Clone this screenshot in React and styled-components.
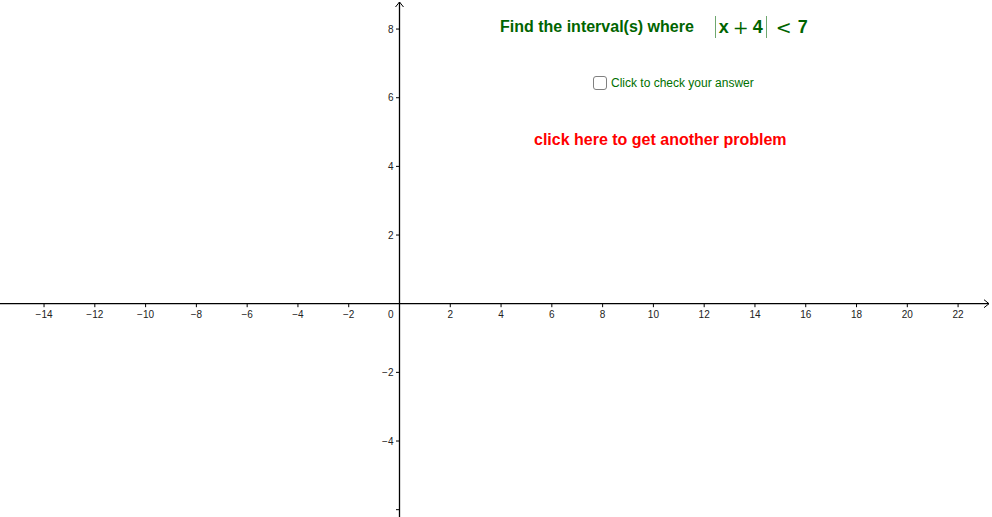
import styled, { createGlobalStyle } from "styled-components";

const GlobalStyle = createGlobalStyle`
    body {
        margin: 0;
        background: #ffffff;
        font-family: "Liberation Sans", Arial, sans-serif;
    }
`;

const W = 992;
const H = 517;
const X0 = 399.5;
const DX = 25.39;
const Y0 = 303.7;
const DY = 34.33;

const xTicks = [];
for (let v = -14; v <= 22; v += 2) if (v !== 0) xTicks.push(v);
const yTicks = [-6, -4, -2, 2, 4, 6, 8];

const label = (v) => (v < 0 ? "\u2212" + Math.abs(v) : String(v));

const App = () => {
    return (
        <>
            <GlobalStyle />
            <Canvas>
                <Graph width={W} height={H} viewBox={`0 0 ${W} ${H}`}>
                    <g stroke="#000" strokeWidth="1.3" fill="none">
                        <line x1="0" y1={Y0} x2={W - 3} y2={Y0} />
                        <polyline points={`${W - 8},${Y0 - 4} ${W - 3},${Y0} ${W - 8},${Y0 + 4}`} strokeWidth="1" />
                        <line x1={X0} y1={H} x2={X0} y2="2" />
                        <polyline points={`${X0 - 4},7 ${X0},2 ${X0 + 4},7`} strokeWidth="1" />
                        {xTicks.map((v) => (
                            <line key={v} x1={X0 + v * DX} y1={Y0} x2={X0 + v * DX} y2={Y0 + 3.5} strokeWidth="1" />
                        ))}
                        {yTicks.map((v) => (
                            <line key={v} x1={X0 - 3.5} y1={Y0 - v * DY} x2={X0} y2={Y0 - v * DY} strokeWidth="1" />
                        ))}
                    </g>
                    <g fill="#222" fontSize="10" fontFamily="Liberation Sans, Arial, sans-serif">
                        {xTicks.map((v) => (
                            <text key={v} x={X0 + v * DX} y={Y0 + 14.5} textAnchor="middle">
                                {label(v)}
                            </text>
                        ))}
                        {yTicks.filter((v) => v !== -6).map((v) => (
                            <text key={v} x={X0 - 6} y={Y0 - v * DY + 3.5} textAnchor="end">
                                {label(v)}
                            </text>
                        ))}
                        <text x={X0 - 6} y={Y0 + 14.5} textAnchor="end">0</text>
                    </g>
                </Graph>

                <Title>
                    Find the interval(s) where
                    <Formula>
                        <Bar />
                        x<Op>+</Op>4
                        <Bar />
                        <Op wide>&lt;</Op>7
                    </Formula>
                </Title>

                <CheckRow>
                    <Box />
                    Click to check your answer
                </CheckRow>

                <AnotherLink>click here to get another problem</AnotherLink>
            </Canvas>
        </>
    );
};

const Canvas = styled.div`
    position: relative;
    width: ${W}px;
    height: ${H}px;
    overflow: hidden;
    background: #ffffff;
`;

const Graph = styled.svg`
    display: block;
`;

const Title = styled.div`
    position: absolute;
    left: 500px;
    top: 16px;
    display: flex;
    align-items: center;
    font-weight: bold;
    font-size: 16px;
    color: #006400;
    white-space: nowrap;
`;

const Formula = styled.span`
    display: inline-flex;
    align-items: center;
    margin-left: 18px;
    font-size: 18px;
    font-weight: bold;
    color: #006400;
`;

const Bar = styled.span`
    display: inline-block;
    width: 1px;
    height: 22px;
    margin: 0 3px;
    background: #6fa86f;
`;

const Op = styled.span`
    font-family: "DejaVu Serif", "Liberation Serif", serif;
    font-weight: normal;
    font-size: 19px;
    margin: 0 ${(p) => (p.wide ? "6px" : "4px")};
`;

const CheckRow = styled.div`
    position: absolute;
    left: 593px;
    top: 76px;
    display: flex;
    align-items: center;
    gap: 4px;
    font-size: 12px;
    color: #007000;
    white-space: nowrap;
`;

const Box = styled.span`
    display: inline-block;
    width: 12px;
    height: 12px;
    border: 1.5px solid #808080;
    border-radius: 3px;
    background: #fff;
`;

const AnotherLink = styled.div`
    position: absolute;
    left: 534px;
    top: 131px;
    font-weight: bold;
    font-size: 16px;
    color: #ff0000;
    white-space: nowrap;
    cursor: pointer;
`;

export default App;
